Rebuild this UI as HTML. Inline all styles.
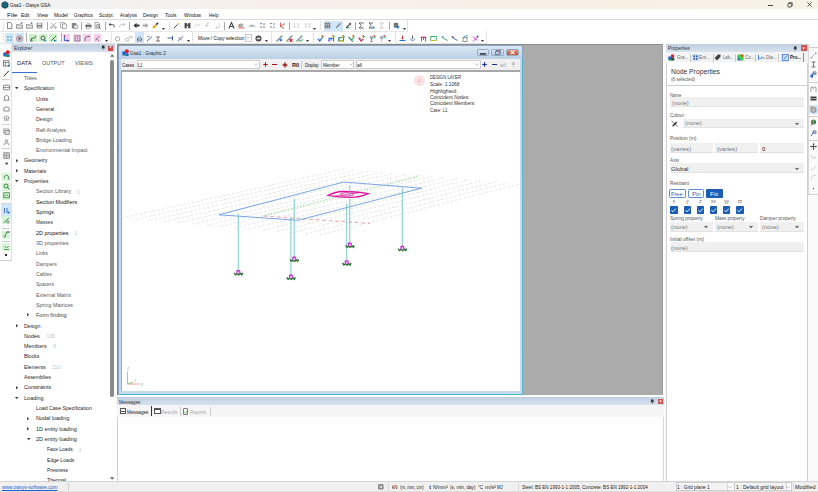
<!DOCTYPE html>
<html><head><meta charset="utf-8">
<style>
*{margin:0;padding:0;box-sizing:border-box}
html,body{width:818px;height:492px;overflow:hidden;background:#f0f0f0;font-family:"Liberation Sans",sans-serif;color:#222;position:relative}
.a{position:absolute}
.t{position:absolute;white-space:nowrap;line-height:1;transform-origin:0 50%}
svg{position:absolute;overflow:visible}
</style></head><body>
<div class="a" style="left:0px;top:0px;width:818px;height:9px;background:linear-gradient(90deg,#f2f2f2 0%,#f2f2f2 12%,#f8efea 35%,#f8f0e8 55%,#f8f0e3 75%,#f8f2e6 100%);"></div>
<svg style="left:1px;top:1px" width="8" height="8"><polygon points="4,0.2 7.4,2 7.4,6 4,7.8 0.6,6 0.6,2" fill="#0e4e60"/><circle cx="4" cy="4" r="1.6" fill="none" stroke="#2a8aa0" stroke-width="0.8"/></svg>
<div class="t" style="left:10.30px;top:3.07px;font-size:5.6px;color:#111;transform:scaleX(0.851);">Gsa1 - Oasys GSA</div>
<div class="a" style="left:768px;top:4.5px;width:5px;height:0.8px;background:#444;"></div>
<svg style="left:786.5px;top:2px" width="6" height="6"><path d="M1.8 1.2V0.6H5.2V4H4.6" fill="none" stroke="#333" stroke-width="0.7"/><rect x="0.9" y="1.5" width="3.4" height="3.6" fill="none" stroke="#333" stroke-width="0.8" rx="0.6"/></svg>
<svg style="left:806.8px;top:2.2px" width="5" height="5"><path d="M0.4 0.4L4.6 4.6M4.6 0.4L0.4 4.6" stroke="#333" stroke-width="0.8"/></svg>
<div class="a" style="left:0px;top:9px;width:818px;height:11px;background:#ffffff;"></div>
<div class="a" style="left:0px;top:19.3px;width:818px;height:1px;background:#dadada;"></div>
<div class="t" style="left:7.00px;top:12.97px;font-size:5.6px;color:#111;transform:scaleX(1.164);">File</div>
<div class="t" style="left:21.00px;top:12.97px;font-size:5.6px;color:#111;transform:scaleX(0.881);">Edit</div>
<div class="t" style="left:36.50px;top:12.97px;font-size:5.6px;color:#111;transform:scaleX(0.914);">View</div>
<div class="t" style="left:53.50px;top:12.97px;font-size:5.6px;color:#111;transform:scaleX(0.918);">Model</div>
<div class="t" style="left:74.00px;top:12.97px;font-size:5.6px;color:#111;transform:scaleX(0.848);">Graphics</div>
<div class="t" style="left:99.00px;top:12.97px;font-size:5.6px;color:#111;transform:scaleX(0.867);">Sculpt</div>
<div class="t" style="left:119.50px;top:12.97px;font-size:5.6px;color:#111;transform:scaleX(0.815);">Analysis</div>
<div class="t" style="left:143.00px;top:12.97px;font-size:5.6px;color:#111;transform:scaleX(0.861);">Design</div>
<div class="t" style="left:165.00px;top:12.97px;font-size:5.6px;color:#111;transform:scaleX(0.880);">Tools</div>
<div class="t" style="left:183.50px;top:12.97px;font-size:5.6px;color:#111;transform:scaleX(0.854);">Window</div>
<div class="t" style="left:209.00px;top:12.97px;font-size:5.6px;color:#111;transform:scaleX(0.825);">Help</div>
<div class="a" style="left:0px;top:20px;width:818px;height:24px;background:#ffffff;"></div>
<div class="a" style="left:0px;top:31px;width:407px;height:0.6px;background:#e6e6e6;"></div>
<div class="a" style="left:407px;top:20px;width:0.8px;height:11.5px;background:#e2e2e2;"></div>
<div class="a" style="left:0px;top:43.2px;width:486px;height:0.8px;background:#e4e4e4;"></div>
<div class="a" style="left:486px;top:31px;width:0.8px;height:13px;background:#e2e2e2;"></div>
<div class="a" style="left:2.5px;top:22px;width:0.8px;height:0.8px;background:#d4d4d4;"></div>
<div class="a" style="left:2.5px;top:24px;width:0.8px;height:0.8px;background:#d4d4d4;"></div>
<div class="a" style="left:2.5px;top:26px;width:0.8px;height:0.8px;background:#d4d4d4;"></div>
<div class="a" style="left:2.5px;top:28px;width:0.8px;height:0.8px;background:#d4d4d4;"></div>
<div class="a" style="left:2.5px;top:30px;width:0.8px;height:0.8px;background:#d4d4d4;"></div>
<div class="a" style="left:2.5px;top:33px;width:0.8px;height:0.8px;background:#d4d4d4;"></div>
<div class="a" style="left:2.5px;top:35px;width:0.8px;height:0.8px;background:#d4d4d4;"></div>
<div class="a" style="left:2.5px;top:37px;width:0.8px;height:0.8px;background:#d4d4d4;"></div>
<div class="a" style="left:2.5px;top:39px;width:0.8px;height:0.8px;background:#d4d4d4;"></div>
<div class="a" style="left:2.5px;top:41px;width:0.8px;height:0.8px;background:#d4d4d4;"></div>
<svg style="left:6.00px;top:22.20px" width="7" height="7" viewBox="0 0 7 7"><path d="M1.5 0.5H4.5L5.8 1.8V6.5H1.5Z" fill="#fff" stroke="#555" stroke-width="0.7"/></svg>
<svg style="left:16.00px;top:22.20px" width="7" height="7" viewBox="0 0 7 7"><path d="M0.5 2.5H3L3.6 3H6.5V6.3H0.5Z" fill="#ddd" stroke="#666" stroke-width="0.6"/><circle cx="5.5" cy="1.2" r="0.9" fill="#3a7de0"/></svg>
<svg style="left:26.00px;top:22.20px" width="7" height="7" viewBox="0 0 7 7"><path d="M0.5 2.5H3L3.6 3H6.5V6.3H0.5Z" fill="#ddd" stroke="#666" stroke-width="0.6"/><circle cx="5.5" cy="1.2" r="0.9" fill="#3a7de0"/></svg>
<svg style="left:36.00px;top:22.20px" width="7" height="7" viewBox="0 0 7 7"><rect x="0.7" y="0.8" width="5.6" height="5.5" fill="#777"/><rect x="1.7" y="1.2" width="3.6" height="1.8" fill="#eee"/><rect x="1.6" y="4" width="3.8" height="2" fill="#bbb"/></svg>
<svg style="left:50.00px;top:22.20px" width="7" height="7" viewBox="0 0 7 7"><path d="M1 0.8L5.5 5.5M6 0.8L1.5 5.5" stroke="#888" stroke-width="0.7"/><circle cx="1.5" cy="5.6" r="0.9" fill="none" stroke="#888" stroke-width="0.6"/><circle cx="5.5" cy="5.6" r="0.9" fill="none" stroke="#888" stroke-width="0.6"/></svg>
<svg style="left:60.00px;top:22.20px" width="7" height="7" viewBox="0 0 7 7"><rect x="0.7" y="0.7" width="3.8" height="4.5" fill="#fff" stroke="#777" stroke-width="0.6"/><rect x="2.5" y="2" width="3.8" height="4.5" fill="#fff" stroke="#777" stroke-width="0.6"/></svg>
<svg style="left:70.50px;top:22.20px" width="7" height="7" viewBox="0 0 7 7"><rect x="0.8" y="1" width="4.5" height="5.5" fill="#888"/><rect x="3" y="3" width="3.5" height="3.6" fill="#eee" stroke="#666" stroke-width="0.5"/></svg>
<svg style="left:84.50px;top:22.20px" width="7" height="7" viewBox="0 0 7 7"><rect x="0.5" y="2.5" width="6" height="3" rx="0.8" fill="#666"/><rect x="1.7" y="0.8" width="3.6" height="2" fill="#ccc"/><rect x="1.7" y="4.5" width="3.6" height="2" fill="#eee" stroke="#666" stroke-width="0.4"/></svg>
<svg style="left:94.00px;top:22.20px" width="7" height="7" viewBox="0 0 7 7"><path d="M1 0.5H4.5L5.5 1.5V6.3H1Z" fill="#fff" stroke="#666" stroke-width="0.6"/><circle cx="3.8" cy="3.8" r="1.4" fill="none" stroke="#444" stroke-width="0.6"/><path d="M4.8 4.8L6.5 6.5" stroke="#444" stroke-width="0.8"/></svg>
<svg style="left:108.00px;top:22.20px" width="7" height="7" viewBox="0 0 7 7"><path d="M1 2.5H4.5Q6.2 2.5 6.2 4.2V5.5" fill="none" stroke="#555" stroke-width="1"/><path d="M0.5 2.5L2.5 0.8V4.2Z" fill="#555"/></svg>
<svg style="left:118.50px;top:22.20px" width="7" height="7" viewBox="0 0 7 7"><path d="M6 2.5H2.5Q0.8 2.5 0.8 4.2V5.5" fill="none" stroke="#bbb" stroke-width="0.8"/><path d="M6.5 2.5L4.5 0.8V4.2Z" fill="#bbb"/></svg>
<svg style="left:132.50px;top:22.20px" width="7" height="7" viewBox="0 0 7 7"><path d="M0.5 3.5L3.5 0.8V2.5H6.5V4.5H3.5V6.2Z" fill="#333"/></svg>
<svg style="left:142.00px;top:22.20px" width="7" height="7" viewBox="0 0 7 7"><path d="M6.5 3.5L3.5 0.8V2.5H0.5V4.5H3.5V6.2Z" fill="#aaa"/></svg>
<svg style="left:152.20px;top:22.20px" width="7" height="7" viewBox="0 0 7 7"><path d="M1 4.5L3 2.5L4.5 4L2.5 6.2Q1 6.5 0.5 6Z" fill="#f0a010"/><path d="M3.5 2L5.8 0.3L6.6 1.1L4.8 3.4Z" fill="#333"/></svg>
<svg style="left:172.50px;top:22.20px" width="7" height="7" viewBox="0 0 7 7"><path d="M0.8 6.2L4.5 2.5" stroke="#444" stroke-width="1"/><path d="M4.5 1.5L6 0.5L5.5 2.5Z" fill="#f0a010"/></svg>
<svg style="left:183.50px;top:22.20px" width="7" height="7" viewBox="0 0 7 7"><rect x="0.6" y="1" width="2.2" height="5.3" fill="#444"/><rect x="4.2" y="1" width="2.2" height="5.3" fill="#444"/><rect x="2.5" y="2.5" width="2" height="1.5" fill="#444"/></svg>
<svg style="left:194.00px;top:22.20px" width="7" height="7" viewBox="0 0 7 7"><path d="M1 5.5Q2 1 3.5 3T6 1.5" fill="none" stroke="#c8c8c8" stroke-width="0.8"/></svg>
<svg style="left:204.30px;top:22.20px" width="7" height="7" viewBox="0 0 7 7"><path d="M2 6L3 1H5.5M1.5 3.5H4.5" fill="none" stroke="#c8c8c8" stroke-width="0.8"/></svg>
<svg style="left:214.00px;top:22.20px" width="7" height="7" viewBox="0 0 7 7"><path d="M5.5 1V5.5H1.5M3 4L1.5 5.5L3 7" fill="none" stroke="#c8c8c8" stroke-width="0.7"/></svg>
<svg style="left:228.00px;top:22.20px" width="7" height="7" viewBox="0 0 7 7"><path d="M0.8 6.5L3.5 0.5L6.2 6.5M1.8 4.5H5.2" fill="none" stroke="#444" stroke-width="1.1"/></svg>
<svg style="left:238.30px;top:22.20px" width="7" height="7" viewBox="0 0 7 7"><text x="0.3" y="4.5" font-size="4.5" font-family="Liberation Sans" fill="#444">ab</text><path d="M0.5 6H6.5" stroke="#d03030" stroke-width="0.8"/></svg>
<svg style="left:248.50px;top:22.20px" width="7" height="7" viewBox="0 0 7 7"><text x="0" y="5" font-size="4" font-family="Liberation Sans" fill="#666">abc</text></svg>
<svg style="left:258.80px;top:22.20px" width="7" height="7" viewBox="0 0 7 7"><circle cx="2" cy="1.5" r="0.8" fill="#3a7de0"/><circle cx="5" cy="2" r="0.8" fill="#666"/><circle cx="2" cy="5" r="0.8" fill="#666"/><circle cx="5" cy="5.3" r="0.8" fill="#666"/></svg>
<svg style="left:269.10px;top:22.20px" width="7" height="7" viewBox="0 0 7 7"><circle cx="2" cy="1.5" r="0.8" fill="#666"/><circle cx="5" cy="2" r="0.8" fill="#3a7de0"/><circle cx="2" cy="5" r="0.8" fill="#666"/><circle cx="5" cy="5.3" r="0.8" fill="#3a7de0"/></svg>
<svg style="left:279.30px;top:22.20px" width="7" height="7" viewBox="0 0 7 7"><path d="M1.5 0.5V4.5L5 6.5M1.5 4.5L5 2" fill="none" stroke="#d03030" stroke-width="0.8"/><circle cx="5" cy="2" r="0.7" fill="#28a060"/></svg>
<svg style="left:293.30px;top:22.20px" width="7" height="7" viewBox="0 0 7 7"><path d="M1.5 1V6M5.5 1V6M0.5 2H6.5M0.5 5H6.5" stroke="#ccc" stroke-width="0.6"/></svg>
<svg style="left:303.50px;top:22.20px" width="7" height="7" viewBox="0 0 7 7"><path d="M1.5 1V6M5.5 1V6M0.5 2H6.5M0.5 5H6.5" stroke="#ccc" stroke-width="0.6"/></svg>
<svg style="left:324.30px;top:22.20px" width="7" height="7" viewBox="0 0 7 7"><rect x="0.7" y="0.7" width="5.6" height="5.6" fill="#777"/><path d="M0.7 2.2H6.3M2.5 2.2V6.3M4.4 2.2V6.3" stroke="#ddd" stroke-width="0.5"/></svg>
<svg style="left:335.30px;top:22.20px" width="7" height="7" viewBox="0 0 7 7"><path d="M0.8 6.2L1.2 4.8L5.2 0.8L6.2 1.8L2.2 5.8Z" fill="#888"/></svg>
<svg style="left:344.90px;top:22.20px" width="7" height="7" viewBox="0 0 7 7"><path d="M1 6L4 3" stroke="#555" stroke-width="1.2"/><circle cx="5" cy="2" r="1.3" fill="#666"/><circle cx="3" cy="5.5" r="1" fill="#28a060"/></svg>
<svg style="left:358.10px;top:22.20px" width="7" height="7" viewBox="0 0 7 7"><path d="M5.8 1H1L3.5 3.5L1 6H5.8" fill="none" stroke="#444" stroke-width="0.8"/></svg>
<svg style="left:368.30px;top:22.20px" width="7" height="7" viewBox="0 0 7 7"><path d="M5 1H1L3.2 3.5L1 6H5" fill="none" stroke="#444" stroke-width="0.8"/><rect x="4.5" y="4.5" width="2" height="2" fill="#3a7de0"/></svg>
<svg style="left:378.50px;top:22.20px" width="7" height="7" viewBox="0 0 7 7"><path d="M5 1H1L3.2 3.5L1 6H5" fill="none" stroke="#bbb" stroke-width="0.8"/></svg>
<svg style="left:392.50px;top:22.20px" width="7" height="7" viewBox="0 0 7 7"><rect x="0.8" y="0.8" width="4.5" height="5" rx="1" fill="#777"/><circle cx="4.8" cy="5" r="1.5" fill="#3a7de0"/></svg>
<div class="a" style="left:323.5px;top:20.5px;width:19.5px;height:10.5px;background:#cfe6fb;"></div>
<svg style="left:324.30px;top:22.20px" width="7" height="7" viewBox="0 0 7 7"><rect x="0.7" y="0.7" width="5.6" height="5.6" fill="#777"/><path d="M0.7 2.2H6.3M2.5 2.2V6.3M4.4 2.2V6.3" stroke="#ddd" stroke-width="0.5"/></svg>
<svg style="left:335.30px;top:22.20px" width="7" height="7" viewBox="0 0 7 7"><path d="M0.8 6.2L1.2 4.8L5.2 0.8L6.2 1.8L2.2 5.8Z" fill="#888"/></svg>
<div class="a" style="left:46.5px;top:21.5px;width:0.8px;height:8.5px;background:#a8a8a8;"></div>
<div class="a" style="left:80.5px;top:21.5px;width:0.8px;height:8.5px;background:#a8a8a8;"></div>
<div class="a" style="left:104.5px;top:21.5px;width:0.8px;height:8.5px;background:#a8a8a8;"></div>
<div class="a" style="left:128.6px;top:21.5px;width:0.8px;height:8.5px;background:#a8a8a8;"></div>
<div class="a" style="left:224px;top:21.5px;width:0.8px;height:8.5px;background:#a8a8a8;"></div>
<div class="a" style="left:288.7px;top:21.5px;width:0.8px;height:8.5px;background:#a8a8a8;"></div>
<div class="a" style="left:354.5px;top:21.5px;width:0.8px;height:8.5px;background:#a8a8a8;"></div>
<div class="a" style="left:388.7px;top:21.5px;width:0.8px;height:8.5px;background:#a8a8a8;"></div>
<div class="a" style="left:169px;top:21.5px;width:0.7px;height:0.7px;background:#c8c8c8;"></div>
<div class="a" style="left:169px;top:23.5px;width:0.7px;height:0.7px;background:#c8c8c8;"></div>
<div class="a" style="left:169px;top:25.5px;width:0.7px;height:0.7px;background:#c8c8c8;"></div>
<div class="a" style="left:169px;top:27.5px;width:0.7px;height:0.7px;background:#c8c8c8;"></div>
<div class="a" style="left:319.5px;top:21.5px;width:0.7px;height:0.7px;background:#c8c8c8;"></div>
<div class="a" style="left:319.5px;top:23.5px;width:0.7px;height:0.7px;background:#c8c8c8;"></div>
<div class="a" style="left:319.5px;top:25.5px;width:0.7px;height:0.7px;background:#c8c8c8;"></div>
<div class="a" style="left:319.5px;top:27.5px;width:0.7px;height:0.7px;background:#c8c8c8;"></div>
<svg style="left:162.30px;top:27.50px" width="3" height="2"><path d="M0 0H3L1.5 2Z" fill="#333"/></svg>
<svg style="left:312.90px;top:27.50px" width="3" height="2"><path d="M0 0H3L1.5 2Z" fill="#333"/></svg>
<svg style="left:402.50px;top:27.50px" width="3" height="2"><path d="M0 0H3L1.5 2Z" fill="#333"/></svg>
<div class="a" style="left:4.5px;top:32.5px;width:9.8px;height:10px;background:#cce8fc;"></div>
<div class="a" style="left:14.6px;top:32.5px;width:9.8px;height:10px;background:#cce8fc;"></div>
<svg style="left:6.00px;top:34.60px" width="7" height="7" viewBox="0 0 7 7"><circle cx="2" cy="2" r="0.8" fill="#4a8a8a"/><circle cx="5" cy="2" r="0.8" fill="#4a8a8a"/><circle cx="2" cy="5" r="0.8" fill="#4a8a8a"/><circle cx="5" cy="5" r="0.8" fill="#4a8a8a"/></svg>
<svg style="left:16.00px;top:34.60px" width="7" height="7" viewBox="0 0 7 7"><circle cx="3.5" cy="3.5" r="2.8" fill="none" stroke="#d03030" stroke-width="0.7"/><circle cx="3.5" cy="3.5" r="1.3" fill="#555"/></svg>
<div class="a" style="left:29.2px;top:34.300000000000004px;width:7.6px;height:7.6px;background:#c6f2c6;"></div>
<svg style="left:29.50px;top:34.60px" width="7" height="7" viewBox="0 0 7 7"><path d="M1 6Q1 2 3 3T6 0.8" fill="none" stroke="#444" stroke-width="0.8"/><circle cx="1.5" cy="5.5" r="0.9" fill="none" stroke="#444" stroke-width="0.5"/></svg>
<div class="a" style="left:39.2px;top:34.300000000000004px;width:7.6px;height:7.6px;background:#c6f2c6;"></div>
<svg style="left:39.50px;top:34.60px" width="7" height="7" viewBox="0 0 7 7"><circle cx="3" cy="3" r="2" fill="none" stroke="#444" stroke-width="0.8"/><path d="M4 4.5L6.5 5.5L4.5 6.5Z" fill="#2060d0"/></svg>
<div class="a" style="left:49.2px;top:34.300000000000004px;width:7.6px;height:7.6px;background:#c6f2c6;"></div>
<svg style="left:49.50px;top:34.60px" width="7" height="7" viewBox="0 0 7 7"><path d="M1 6L6 1" stroke="#444" stroke-width="0.8"/><path d="M3.5 4.5L6.5 5.5L4.5 6.8Z" fill="#2060d0"/></svg>
<div class="a" style="left:62.7px;top:34.300000000000004px;width:7.6px;height:7.6px;background:#f6cdee;"></div>
<svg style="left:63.00px;top:34.60px" width="7" height="7" viewBox="0 0 7 7"><path d="M1.5 0.5V5.5H6" fill="none" stroke="#3050c0" stroke-width="0.8"/><circle cx="1.5" cy="0.8" r="0.7" fill="#d03030"/><path d="M3.5 4.5L6.5 5.5L4.5 6.8Z" fill="#2060d0"/></svg>
<div class="a" style="left:73.2px;top:34.300000000000004px;width:7.6px;height:7.6px;background:#f6cdee;"></div>
<svg style="left:73.50px;top:34.60px" width="7" height="7" viewBox="0 0 7 7"><rect x="1" y="1" width="5" height="5" fill="none" stroke="#666" stroke-width="0.7"/><path d="M1 3.5H6M3.5 1V6" stroke="#999" stroke-width="0.5"/></svg>
<div class="a" style="left:83.2px;top:34.300000000000004px;width:7.6px;height:7.6px;background:#f6cdee;"></div>
<svg style="left:83.50px;top:34.60px" width="7" height="7" viewBox="0 0 7 7"><path d="M1 6V4Q1 1.5 4 1.5H6" fill="none" stroke="#555" stroke-width="0.8"/></svg>
<div class="a" style="left:93.7px;top:34.300000000000004px;width:7.6px;height:7.6px;background:#f6cdee;"></div>
<svg style="left:94.00px;top:34.60px" width="7" height="7" viewBox="0 0 7 7"><path d="M1 5.5L5.5 1M2 3L5 6" stroke="#777" stroke-width="0.8"/></svg>
<svg style="left:114.10px;top:34.60px" width="7" height="7" viewBox="0 0 7 7"><circle cx="3.5" cy="3.8" r="2.2" fill="none" stroke="#777" stroke-width="0.6"/></svg>
<svg style="left:125.10px;top:34.60px" width="7" height="7" viewBox="0 0 7 7"><circle cx="2" cy="4.8" r="1.6" fill="none" stroke="#999" stroke-width="0.6"/><text x="3.5" y="2.5" font-size="3" fill="#999">xyz</text></svg>
<div class="a" style="left:134.5px;top:32px;width:9.5px;height:11px;background:#cfe6fb;"></div>
<svg style="left:135.50px;top:34.60px" width="7" height="7" viewBox="0 0 7 7"><path d="M0.8 5H6.2M1.5 5V3.5Q3.5 1 5.5 3.5V5" fill="none" stroke="#555" stroke-width="0.8"/><circle cx="2" cy="6" r="0.6" fill="#555"/><circle cx="5" cy="6" r="0.6" fill="#555"/></svg>
<svg style="left:146.00px;top:34.60px" width="7" height="7" viewBox="0 0 7 7"><path d="M0.8 6.2L6.2 1.5" stroke="#2070e0" stroke-width="0.9"/><path d="M1 1.5H4" stroke="#555" stroke-width="0.5"/></svg>
<svg style="left:155.20px;top:34.60px" width="7" height="7" viewBox="0 0 7 7"><path d="M1 2H5M3 2V6M1 6H5" fill="none" stroke="#555" stroke-width="0.8"/></svg>
<svg style="left:166.50px;top:34.60px" width="7" height="7" viewBox="0 0 7 7"><path d="M0.5 3H5.5M5.5 0.8V5.5" stroke="#3050a0" stroke-width="0.9"/></svg>
<svg style="left:177.10px;top:34.60px" width="7" height="7" viewBox="0 0 7 7"><path d="M0.8 6L6.2 1.5" stroke="#2070e0" stroke-width="0.9"/><path d="M1.5 2L5 5.5" stroke="#d03030" stroke-width="0.6"/></svg>
<svg style="left:254.50px;top:34.60px" width="7" height="7" viewBox="0 0 7 7"><circle cx="3.5" cy="3.5" r="3" fill="#3a3a3a"/><circle cx="3.5" cy="3.5" r="2.2" fill="#666"/><rect x="1.8" y="2.8" width="3.4" height="1.4" fill="#ddd"/></svg>
<svg style="left:275.50px;top:34.60px" width="7" height="7" viewBox="0 0 7 7"><path d="M1 6L5.8 1.2" stroke="#9a9a9a" stroke-width="1.7" stroke-linecap="round"/><path d="M1.8 5.2L5 2" stroke="#5a9ae8" stroke-width="0.6" stroke-dasharray="0.8 0.6"/><path d="M3 4.6H6.6L4.8 6.8Z" fill="#1a70e8"/><rect x="4.2" y="3.6" width="1.2" height="1.2" fill="#1a70e8"/></svg>
<svg style="left:285.90px;top:34.60px" width="7" height="7" viewBox="0 0 7 7"><path d="M1 6L5.8 1.2" stroke="#9a9a9a" stroke-width="1.7" stroke-linecap="round"/><path d="M1.8 5.2L5 2" stroke="#5a9ae8" stroke-width="0.6" stroke-dasharray="0.8 0.6"/><path d="M3.6 4L6.4 6.8M6.4 4L3.6 6.8" stroke="#e02020" stroke-width="1.1"/></svg>
<svg style="left:296.20px;top:34.60px" width="7" height="7" viewBox="0 0 7 7"><path d="M1 6L5.8 1.2" stroke="#9a9a9a" stroke-width="1.7" stroke-linecap="round"/><path d="M1.8 5.2L5 2" stroke="#5a9ae8" stroke-width="0.6" stroke-dasharray="0.8 0.6"/><path d="M3 5.5Q4.5 7 6.5 4.5" fill="none" stroke="#20b060" stroke-width="1.1"/><path d="M5.5 4.2L6.8 4.2L6.5 5.5Z" fill="#20b060"/></svg>
<svg style="left:317.00px;top:34.60px" width="7" height="7" viewBox="0 0 7 7"><path d="M0.8 3.8L2.8 6.2L5 2.5" fill="none" stroke="#2a6ad8" stroke-width="1.1"/><path d="M2 3L3 4.5" stroke="#666" stroke-width="0.6"/><circle cx="5.2" cy="0.9" r="0.8" fill="#e03030"/><circle cx="6.3" cy="1.6" r="0.7" fill="#30a0e0"/><circle cx="4.6" cy="2" r="0.7" fill="#f0d020"/><circle cx="5.6" cy="2.6" r="0.7" fill="#30c040"/></svg>
<svg style="left:327.50px;top:34.60px" width="7" height="7" viewBox="0 0 7 7"><path d="M1 6.5V3.2H5.5V6.5M3 3.2V5.5" fill="none" stroke="#2a6ad8" stroke-width="1.1"/><path d="M1 6.5V5" stroke="#c040d0" stroke-width="1"/><circle cx="5.2" cy="0.9" r="0.8" fill="#e03030"/><circle cx="6.3" cy="1.6" r="0.7" fill="#30a0e0"/><circle cx="4.6" cy="2" r="0.7" fill="#f0d020"/><circle cx="5.6" cy="2.6" r="0.7" fill="#30c040"/></svg>
<svg style="left:337.50px;top:34.60px" width="7" height="7" viewBox="0 0 7 7"><rect x="0.9" y="2.6" width="4.6" height="3.4" fill="none" stroke="#20a050" stroke-width="1"/><path d="M0.9 6H5.5" stroke="#f0c000" stroke-width="1"/><path d="M0.9 2.6V6" stroke="#2a6ad8" stroke-width="0.8"/><circle cx="5.2" cy="0.9" r="0.8" fill="#e03030"/><circle cx="6.3" cy="1.6" r="0.7" fill="#30a0e0"/><circle cx="4.6" cy="2" r="0.7" fill="#f0d020"/><circle cx="5.6" cy="2.6" r="0.7" fill="#30c040"/></svg>
<svg style="left:347.80px;top:34.60px" width="7" height="7" viewBox="0 0 7 7"><path d="M0.6 2.2L3 4.8L5.5 3.5M3 4.8L5 6.6" fill="none" stroke="#20a070" stroke-width="1.1"/><path d="M0.6 2.2L2 3.5" stroke="#2a6ad8" stroke-width="1"/><circle cx="5.2" cy="0.9" r="0.8" fill="#e03030"/><circle cx="6.3" cy="1.6" r="0.7" fill="#30a0e0"/><circle cx="4.6" cy="2" r="0.7" fill="#f0d020"/><circle cx="5.6" cy="2.6" r="0.7" fill="#30c040"/></svg>
<svg style="left:358.10px;top:34.60px" width="7" height="7" viewBox="0 0 7 7"><path d="M0.6 3L3.2 6.2L5.2 3.8" fill="none" stroke="#d02040" stroke-width="1.1"/><path d="M1 2.5L3.5 4.5" stroke="#2a6ad8" stroke-width="0.9"/><circle cx="5.2" cy="0.9" r="0.8" fill="#e03030"/><circle cx="6.3" cy="1.6" r="0.7" fill="#30a0e0"/><circle cx="4.6" cy="2" r="0.7" fill="#f0d020"/><circle cx="5.6" cy="2.6" r="0.7" fill="#30c040"/></svg>
<svg style="left:368.50px;top:34.60px" width="7" height="7" viewBox="0 0 7 7"><path d="M2.5 6.6V3.5M1 6.6H4" fill="none" stroke="#888" stroke-width="0.8"/><circle cx="2.7" cy="2.6" r="1.5" fill="none" stroke="#777" stroke-width="0.7"/><path d="M1.5 2.2L3.8 3.2" stroke="#2a6ad8" stroke-width="0.8"/><circle cx="5.2" cy="0.9" r="0.8" fill="#e03030"/><circle cx="6.3" cy="1.6" r="0.7" fill="#30a0e0"/><circle cx="4.6" cy="2" r="0.7" fill="#f0d020"/><circle cx="5.6" cy="2.6" r="0.7" fill="#30c040"/></svg>
<svg style="left:378.50px;top:34.60px" width="7" height="7" viewBox="0 0 7 7"><path d="M1.5 6.5Q3.5 5.8 2.5 4.5" fill="none" stroke="#999" stroke-width="0.8"/><circle cx="2.7" cy="2.6" r="1.5" fill="none" stroke="#888" stroke-width="0.7"/><path d="M1.5 2.2L3.8 3.2" stroke="#2a6ad8" stroke-width="0.8"/><circle cx="5.2" cy="0.9" r="0.8" fill="#e03030"/><circle cx="6.3" cy="1.6" r="0.7" fill="#30a0e0"/><circle cx="4.6" cy="2" r="0.7" fill="#f0d020"/><circle cx="5.6" cy="2.6" r="0.7" fill="#30c040"/></svg>
<svg style="left:399.00px;top:34.60px" width="7" height="7" viewBox="0 0 7 7"><path d="M3.5 0.5V4" stroke="#d02020" stroke-width="0.9"/><path d="M2 3L3.5 4.5L5 3" fill="#d02020"/><path d="M0.5 5.5H6.5" stroke="#2070e0" stroke-width="1"/></svg>
<svg style="left:409.10px;top:34.60px" width="7" height="7" viewBox="0 0 7 7"><path d="M3.5 0.5V4" stroke="#333" stroke-width="0.8"/><path d="M1 3.5L3.5 6L6 3.5" fill="none" stroke="#2070e0" stroke-width="0.9"/></svg>
<svg style="left:419.50px;top:34.60px" width="7" height="7" viewBox="0 0 7 7"><path d="M0.8 2.5H6.2M1.5 2.5V6.5M5.5 2.5V6.5M3.5 2.5V5" stroke="#8040c0" stroke-width="0.9"/><path d="M0.8 2H6.2" stroke="#d03030" stroke-width="0.6"/></svg>
<svg style="left:430.10px;top:34.60px" width="7" height="7" viewBox="0 0 7 7"><rect x="0.8" y="1.5" width="5.4" height="4" fill="none" stroke="#20a040" stroke-width="0.8"/><path d="M0.8 5.5H6.2" stroke="#e0c000" stroke-width="0.9"/></svg>
<svg style="left:440.50px;top:34.60px" width="7" height="7" viewBox="0 0 7 7"><path d="M0.5 2L6.5 5.5" stroke="#20a060" stroke-width="0.9"/><path d="M1 1L3 2.2" stroke="#2080e0" stroke-width="0.7"/></svg>
<svg style="left:451.00px;top:34.60px" width="7" height="7" viewBox="0 0 7 7"><path d="M0.5 2L6.5 5.5" stroke="#2060d0" stroke-width="0.9"/><path d="M1 1L3 3" stroke="#d02020" stroke-width="0.8"/></svg>
<svg style="left:461.50px;top:34.60px" width="7" height="7" viewBox="0 0 7 7"><rect x="1" y="2.5" width="4" height="4" fill="none" stroke="#666" stroke-width="0.7"/><path d="M1.5 2.5L3.5 0.8H6" fill="none" stroke="#2080e0" stroke-width="0.8"/></svg>
<svg style="left:471.50px;top:34.60px" width="7" height="7" viewBox="0 0 7 7"><path d="M1 6.5L6 1.5M1 1.5L5 5.5" stroke="#d020c0" stroke-width="0.9"/><circle cx="5.5" cy="1.5" r="0.9" fill="#2060d0"/></svg>
<div class="a" style="left:26px;top:33px;width:0.8px;height:9px;background:#a8a8a8;"></div>
<div class="a" style="left:60.5px;top:33px;width:0.8px;height:9px;background:#a8a8a8;"></div>
<div class="a" style="left:111px;top:33px;width:0.7px;height:0.7px;background:#c8c8c8;"></div>
<div class="a" style="left:111px;top:35px;width:0.7px;height:0.7px;background:#c8c8c8;"></div>
<div class="a" style="left:111px;top:37px;width:0.7px;height:0.7px;background:#c8c8c8;"></div>
<div class="a" style="left:111px;top:39px;width:0.7px;height:0.7px;background:#c8c8c8;"></div>
<div class="a" style="left:111px;top:41px;width:0.7px;height:0.7px;background:#c8c8c8;"></div>
<div class="a" style="left:191.6px;top:33px;width:0.7px;height:0.7px;background:#c8c8c8;"></div>
<div class="a" style="left:191.6px;top:35px;width:0.7px;height:0.7px;background:#c8c8c8;"></div>
<div class="a" style="left:191.6px;top:37px;width:0.7px;height:0.7px;background:#c8c8c8;"></div>
<div class="a" style="left:191.6px;top:39px;width:0.7px;height:0.7px;background:#c8c8c8;"></div>
<div class="a" style="left:191.6px;top:41px;width:0.7px;height:0.7px;background:#c8c8c8;"></div>
<div class="a" style="left:271px;top:33px;width:0.7px;height:0.7px;background:#c8c8c8;"></div>
<div class="a" style="left:271px;top:35px;width:0.7px;height:0.7px;background:#c8c8c8;"></div>
<div class="a" style="left:271px;top:37px;width:0.7px;height:0.7px;background:#c8c8c8;"></div>
<div class="a" style="left:271px;top:39px;width:0.7px;height:0.7px;background:#c8c8c8;"></div>
<div class="a" style="left:271px;top:41px;width:0.7px;height:0.7px;background:#c8c8c8;"></div>
<div class="a" style="left:313px;top:33px;width:0.7px;height:0.7px;background:#c8c8c8;"></div>
<div class="a" style="left:313px;top:35px;width:0.7px;height:0.7px;background:#c8c8c8;"></div>
<div class="a" style="left:313px;top:37px;width:0.7px;height:0.7px;background:#c8c8c8;"></div>
<div class="a" style="left:313px;top:39px;width:0.7px;height:0.7px;background:#c8c8c8;"></div>
<div class="a" style="left:313px;top:41px;width:0.7px;height:0.7px;background:#c8c8c8;"></div>
<div class="a" style="left:395.3px;top:33px;width:0.7px;height:0.7px;background:#c8c8c8;"></div>
<div class="a" style="left:395.3px;top:35px;width:0.7px;height:0.7px;background:#c8c8c8;"></div>
<div class="a" style="left:395.3px;top:37px;width:0.7px;height:0.7px;background:#c8c8c8;"></div>
<div class="a" style="left:395.3px;top:39px;width:0.7px;height:0.7px;background:#c8c8c8;"></div>
<div class="a" style="left:395.3px;top:41px;width:0.7px;height:0.7px;background:#c8c8c8;"></div>
<svg style="left:104.50px;top:40.00px" width="3" height="2"><path d="M0 0H3L1.5 2Z" fill="#333"/></svg>
<svg style="left:186.50px;top:40.00px" width="3" height="2"><path d="M0 0H3L1.5 2Z" fill="#333"/></svg>
<svg style="left:264.50px;top:40.00px" width="3" height="2"><path d="M0 0H3L1.5 2Z" fill="#333"/></svg>
<svg style="left:306.30px;top:40.00px" width="3" height="2"><path d="M0 0H3L1.5 2Z" fill="#333"/></svg>
<svg style="left:388.20px;top:40.00px" width="3" height="2"><path d="M0 0H3L1.5 2Z" fill="#333"/></svg>
<svg style="left:480.50px;top:40.00px" width="3" height="2"><path d="M0 0H3L1.5 2Z" fill="#333"/></svg>
<div class="t" style="left:197.50px;top:36.27px;font-size:5.6px;color:#111;transform:scaleX(0.844);">Move / Copy selection</div>
<div class="a" style="left:245px;top:33.5px;width:6.5px;height:8px;border:0.6px solid #ccc;background:#fff"></div>
<svg style="left:246.3px;top:36px" width="4" height="3"><path d="M0.3 0.5L2 2.3L3.7 0.5" fill="none" stroke="#777" stroke-width="0.5"/></svg>
<div class="a" style="left:0px;top:44px;width:818px;height:438px;background:#ffffff;"></div>
<div class="a" style="left:0px;top:44px;width:11.5px;height:216px;background:#fbfbfb;"></div>
<div class="a" style="left:11.2px;top:44px;width:0.8px;height:216px;background:#e0e0e0;"></div>
<div class="a" style="left:0px;top:259.5px;width:12px;height:0.8px;background:#cfcfcf;"></div>
<div class="a" style="left:1px;top:203px;width:10px;height:15px;background:#cfe6fb;"></div>
<svg style="left:2.50px;top:49.50px" width="7" height="7" viewBox="0 0 7 7"><rect x="0.3" y="2.5" width="3.8" height="3.8" fill="#2060d0"/><circle cx="4.8" cy="2.2" r="2" fill="#e02020"/><path d="M1.8 6.8L3.6 4L5.4 6.8Z" fill="#20b040"/><rect x="4" y="4.3" width="2.6" height="2.6" fill="#2060d0"/></svg>
<svg style="left:2.50px;top:60.00px" width="7" height="7" viewBox="0 0 7 7"><rect x="0.5" y="0.8" width="5.5" height="5.2" fill="none" stroke="#555" stroke-width="0.7"/><path d="M0.5 2.5H6M2.5 2.5V6" stroke="#555" stroke-width="0.6"/><circle cx="5.8" cy="5.8" r="1" fill="#2070e0"/></svg>
<svg style="left:2.50px;top:69.80px" width="7" height="7" viewBox="0 0 7 7"><path d="M0.8 6.3L5.8 0.8" stroke="#333" stroke-width="1"/></svg>
<svg style="left:2.50px;top:83.50px" width="7" height="7" viewBox="0 0 7 7"><rect x="0.5" y="1.2" width="6" height="4.6" rx="0.8" fill="none" stroke="#555" stroke-width="0.7"/><path d="M0.5 3.5H6.5" stroke="#555" stroke-width="0.6"/></svg>
<svg style="left:2.50px;top:94.10px" width="7" height="7" viewBox="0 0 7 7"><path d="M1.5 6V2.5Q3.5 0 5.5 2.5V6M0.5 6.2H6.5" fill="none" stroke="#666" stroke-width="0.7"/></svg>
<svg style="left:2.50px;top:104.50px" width="7" height="7" viewBox="0 0 7 7"><path d="M0.8 6V3Q3.5 0.5 6.2 3V6H0.8" fill="none" stroke="#666" stroke-width="0.7"/></svg>
<svg style="left:2.50px;top:115.30px" width="7" height="7" viewBox="0 0 7 7"><path d="M1 4Q1 1 3.5 1Q6 1 6 4M2 3V6M3.5 2.5V6M5 3V6" fill="none" stroke="#666" stroke-width="0.6"/></svg>
<svg style="left:2.50px;top:127.90px" width="7" height="7" viewBox="0 0 7 7"><rect x="0.8" y="1" width="4.5" height="4" fill="none" stroke="#666" stroke-width="0.6"/><rect x="2" y="2.5" width="4.5" height="4" fill="#ddd" stroke="#666" stroke-width="0.6"/></svg>
<svg style="left:2.50px;top:138.50px" width="7" height="7" viewBox="0 0 7 7"><circle cx="3.5" cy="2" r="1.3" fill="none" stroke="#666" stroke-width="0.6"/><path d="M1 6.5Q1 3.8 3.5 3.8Q6 3.8 6 6.5" fill="none" stroke="#666" stroke-width="0.6"/></svg>
<svg style="left:2.50px;top:151.50px" width="7" height="7" viewBox="0 0 7 7"><rect x="0.8" y="0.8" width="5.5" height="5.5" fill="#ccc" stroke="#666" stroke-width="0.6"/><path d="M0.8 3.5H6.3M3.5 0.8V6.3" stroke="#888" stroke-width="0.5"/></svg>
<div class="a" style="left:2px;top:173px;width:8px;height:8px;background:#d8f5d8;"></div>
<svg style="left:2.50px;top:173.50px" width="7" height="7" viewBox="0 0 7 7"><path d="M1.5 4.5A2.2 2.2 0 1 1 5.5 4.5" fill="none" stroke="#227733" stroke-width="0.9"/><path d="M4.5 4.5H6.5V6Z" fill="#227733"/></svg>
<div class="a" style="left:2px;top:182.7px;width:8px;height:8px;background:#d8f5d8;"></div>
<svg style="left:2.50px;top:183.20px" width="7" height="7" viewBox="0 0 7 7"><circle cx="3" cy="3" r="2" fill="none" stroke="#227733" stroke-width="0.9"/><path d="M4.5 4.5L6.5 6.5" stroke="#227733" stroke-width="1"/></svg>
<div class="a" style="left:2px;top:191.6px;width:8px;height:8px;background:#d8f5d8;"></div>
<svg style="left:2.50px;top:192.10px" width="7" height="7" viewBox="0 0 7 7"><rect x="0.8" y="0.8" width="5.5" height="5" fill="none" stroke="#227733" stroke-width="0.7"/><path d="M1.5 4.5L3.5 2.5L5.5 4.5" fill="none" stroke="#227733" stroke-width="0.7"/></svg>
<svg style="left:2.50px;top:206.90px" width="7" height="7" viewBox="0 0 7 7"><path d="M1.5 1V6M4 1V6" stroke="#2255aa" stroke-width="0.8"/><circle cx="5.5" cy="5.5" r="1" fill="#2255aa"/></svg>
<div class="a" style="left:2px;top:216px;width:8px;height:8px;background:#d8f5d8;"></div>
<svg style="left:2.50px;top:216.50px" width="7" height="7" viewBox="0 0 7 7"><path d="M0.8 6L5.8 1" stroke="#227733" stroke-width="0.9"/><circle cx="5" cy="5" r="1.2" fill="none" stroke="#444" stroke-width="0.5"/></svg>
<div class="a" style="left:2px;top:230.8px;width:8px;height:8px;background:#d8f5d8;"></div>
<svg style="left:2.50px;top:231.30px" width="7" height="7" viewBox="0 0 7 7"><path d="M0.5 4.5L1.8 6.3L3.5 1H6.5" fill="none" stroke="#227733" stroke-width="0.8"/><path d="M4 1H6.5" stroke="#8030a0" stroke-width="0.8"/></svg>
<div class="a" style="left:2px;top:243px;width:8px;height:8px;background:#d8f5d8;"></div>
<svg style="left:2.50px;top:243.50px" width="7" height="7" viewBox="0 0 7 7"><path d="M1 5.5H6M1.5 2L3 4M5.5 2L4 4" stroke="#227733" stroke-width="0.7"/></svg>
<div class="a" style="left:2px;top:79px;width:8px;height:0.6px;background:#cfcfcf;"></div>
<div class="a" style="left:2px;top:124px;width:8px;height:0.6px;background:#cfcfcf;"></div>
<div class="a" style="left:2px;top:148px;width:8px;height:0.6px;background:#cfcfcf;"></div>
<div class="a" style="left:2px;top:202.8px;width:8px;height:0.6px;background:#cfcfcf;"></div>
<div class="a" style="left:2px;top:227.5px;width:8px;height:0.6px;background:#cfcfcf;"></div>
<div class="a" style="left:2px;top:241px;width:8px;height:0.6px;background:#cfcfcf;"></div>
<svg style="left:4.5px;top:161.5px" width="3" height="3"><path d="M2.5 0L0 1.5L2.5 3Z" fill="#333"/></svg>
<div class="a" style="left:5.2px;top:254.3px;width:1.4px;height:1.4px;background:#333;"></div>
<div class="a" style="left:12px;top:44px;width:104px;height:438px;background:#ffffff;"></div>
<div class="a" style="left:12px;top:44.2px;width:102.6px;height:7.7px;background:linear-gradient(#bfcfe1,#d7e2ee);"></div>
<div class="t" style="left:13.80px;top:46.07px;font-size:5.0px;color:#333;transform:scaleX(0.967);">Explorer</div>
<svg style="left:100.5px;top:45.2px" width="4.5" height="5"><path d="M1 0.5H3.5V2.5L4.2 3.2H0.3L1 2.5Z" fill="#333"/><path d="M2.2 3.2V4.8" stroke="#333" stroke-width="0.6"/></svg>
<div class="a" style="left:108.3px;top:45.6px;width:5.2px;height:5.2px;background:#d24444;"></div>
<svg style="left:109.3px;top:46.3px" width="3" height="3"><path d="M0.2 0.6H2.8L1.5 2.6Z" fill="#fff"/></svg>
<div class="a" style="left:114.6px;top:44px;width:2.4px;height:438px;background:#fcfcfc;"></div>
<div class="t" style="left:17.00px;top:61.20px;font-size:5.8px;color:#1a1a1a;transform:scaleX(0.993);">DATA</div>
<div class="t" style="left:42.00px;top:61.20px;font-size:5.8px;color:#555;transform:scaleX(0.944);">OUTPUT</div>
<div class="t" style="left:75.30px;top:61.20px;font-size:5.8px;color:#555;transform:scaleX(0.952);">VIEWS</div>
<div class="a" style="left:12.2px;top:72px;width:24.4px;height:1px;background:#3a6fd8;"></div>
<div class="a" style="left:109.5px;top:52px;width:5px;height:430px;background:#ffffff;"></div>
<svg style="left:109.8px;top:54.2px" width="4.4" height="3"><path d="M0 2.8L2.2 0.2L4.4 2.8Z" fill="#666"/></svg>
<div class="a" style="left:110px;top:60px;width:3.8px;height:337px;background:#8a8a8a;border-radius:1.8px"></div>
<svg style="left:109.8px;top:476.5px" width="4.4" height="3"><path d="M0 0.2L2.2 2.8L4.4 0.2Z" fill="#666"/></svg>
<div class="a" style="left:12px;top:73px;width:97px;height:409px;overflow:hidden">
<div class="t" style="left:12.40px;top:1.93px;font-size:6.0px;color:#5a5a5a;transform:scaleX(0.907);">Titles</div>
<div class="t" style="left:12.40px;top:12.25px;font-size:6.0px;color:#262626;transform:scaleX(0.888);">Specification</div>
<svg style="left:3.20px;top:14.32px" width="3.5" height="2.5"><path d="M0 0H3.5L1.75 2.2Z" fill="#444"/></svg>
<div class="t" style="left:23.70px;top:22.56px;font-size:6.0px;color:#262626;transform:scaleX(0.900);">Units</div>
<div class="t" style="left:23.70px;top:32.88px;font-size:6.0px;color:#262626;transform:scaleX(0.853);">General</div>
<div class="t" style="left:23.70px;top:43.19px;font-size:6.0px;color:#3a3a3a;transform:scaleX(0.873);">Design</div>
<div class="t" style="left:23.70px;top:53.51px;font-size:6.0px;color:#5a5a5a;transform:scaleX(0.859);">Raft Analysis</div>
<div class="t" style="left:23.70px;top:63.83px;font-size:6.0px;color:#5a5a5a;transform:scaleX(0.887);">Bridge Loading</div>
<div class="t" style="left:23.70px;top:74.14px;font-size:6.0px;color:#5a5a5a;transform:scaleX(0.888);">Environmental Impact</div>
<div class="t" style="left:12.40px;top:84.46px;font-size:6.0px;color:#262626;transform:scaleX(0.892);">Geometry</div>
<svg style="left:4.10px;top:85.73px" width="2.5" height="3.6"><path d="M0 0V3.6L2.2 1.8Z" fill="#444"/></svg>
<div class="t" style="left:12.40px;top:94.77px;font-size:6.0px;color:#262626;transform:scaleX(0.912);">Materials</div>
<svg style="left:4.10px;top:96.04px" width="2.5" height="3.6"><path d="M0 0V3.6L2.2 1.8Z" fill="#444"/></svg>
<div class="t" style="left:12.40px;top:105.09px;font-size:6.0px;color:#262626;transform:scaleX(0.892);">Properties</div>
<svg style="left:3.20px;top:107.16px" width="3.5" height="2.5"><path d="M0 0H3.5L1.75 2.2Z" fill="#444"/></svg>
<div class="t" style="left:23.70px;top:115.41px;font-size:6.0px;color:#5a5a5a;transform:scaleX(0.875);">Section Library</div>
<div class="t" style="left:64.90px;top:116.75px;font-size:5.0px;color:#c4c4c4;">1</div>
<div class="t" style="left:23.70px;top:125.72px;font-size:6.0px;color:#161616;transform:scaleX(0.897);">Section Modifiers</div>
<div class="t" style="left:23.70px;top:136.04px;font-size:6.0px;color:#161616;transform:scaleX(0.880);">Springs</div>
<div class="t" style="left:23.70px;top:146.35px;font-size:6.0px;color:#3a3a3a;transform:scaleX(0.822);">Masses</div>
<div class="t" style="left:23.70px;top:156.67px;font-size:6.0px;color:#0a0a0a;transform:scaleX(0.900);">2D properties</div>
<div class="t" style="left:62.30px;top:158.02px;font-size:5.0px;color:#c4c4c4;">1</div>
<div class="t" style="left:23.70px;top:166.99px;font-size:6.0px;color:#5a5a5a;transform:scaleX(0.900);">3D properties</div>
<div class="t" style="left:23.70px;top:177.30px;font-size:6.0px;color:#5a5a5a;transform:scaleX(0.850);">Links</div>
<div class="t" style="left:23.70px;top:187.62px;font-size:6.0px;color:#5a5a5a;transform:scaleX(0.855);">Dampers</div>
<div class="t" style="left:23.70px;top:197.93px;font-size:6.0px;color:#5a5a5a;transform:scaleX(0.841);">Cables</div>
<div class="t" style="left:23.70px;top:208.25px;font-size:6.0px;color:#5a5a5a;transform:scaleX(0.813);">Spacers</div>
<div class="t" style="left:23.70px;top:218.57px;font-size:6.0px;color:#5a5a5a;transform:scaleX(0.875);">External Matrix</div>
<div class="t" style="left:23.70px;top:228.88px;font-size:6.0px;color:#5a5a5a;transform:scaleX(0.888);">Spring Matrices</div>
<div class="t" style="left:23.70px;top:239.20px;font-size:6.0px;color:#3a3a3a;transform:scaleX(0.915);">Form finding</div>
<svg style="left:15.40px;top:240.47px" width="2.5" height="3.6"><path d="M0 0V3.6L2.2 1.8Z" fill="#444"/></svg>
<div class="t" style="left:12.40px;top:249.51px;font-size:6.0px;color:#262626;transform:scaleX(0.873);">Design</div>
<svg style="left:4.10px;top:250.78px" width="2.5" height="3.6"><path d="M0 0V3.6L2.2 1.8Z" fill="#444"/></svg>
<div class="t" style="left:12.40px;top:259.83px;font-size:6.0px;color:#262626;transform:scaleX(0.911);">Nodes</div>
<div class="t" style="left:34.40px;top:261.18px;font-size:5.0px;color:#c4c4c4;">138</div>
<div class="t" style="left:12.40px;top:270.15px;font-size:6.0px;color:#262626;transform:scaleX(0.908);">Members</div>
<div class="t" style="left:41.30px;top:271.49px;font-size:5.0px;color:#c4c4c4;">6</div>
<div class="t" style="left:12.40px;top:280.46px;font-size:6.0px;color:#262626;transform:scaleX(0.866);">Blocks</div>
<div class="t" style="left:12.40px;top:290.78px;font-size:6.0px;color:#262626;transform:scaleX(0.864);">Elements</div>
<div class="t" style="left:40.20px;top:292.12px;font-size:5.0px;color:#c4c4c4;">110</div>
<div class="t" style="left:12.40px;top:301.09px;font-size:6.0px;color:#262626;transform:scaleX(0.877);">Assemblies</div>
<div class="t" style="left:12.40px;top:311.41px;font-size:6.0px;color:#262626;transform:scaleX(0.900);">Constraints</div>
<svg style="left:4.10px;top:312.68px" width="2.5" height="3.6"><path d="M0 0V3.6L2.2 1.8Z" fill="#444"/></svg>
<div class="t" style="left:12.40px;top:321.73px;font-size:6.0px;color:#262626;transform:scaleX(0.918);">Loading</div>
<svg style="left:3.20px;top:323.80px" width="3.5" height="2.5"><path d="M0 0H3.5L1.75 2.2Z" fill="#444"/></svg>
<div class="t" style="left:23.70px;top:332.04px;font-size:6.0px;color:#262626;transform:scaleX(0.862);">Load Case Specification</div>
<div class="t" style="left:23.70px;top:342.36px;font-size:6.0px;color:#262626;transform:scaleX(0.905);">Nodal loading</div>
<svg style="left:15.40px;top:343.63px" width="2.5" height="3.6"><path d="M0 0V3.6L2.2 1.8Z" fill="#444"/></svg>
<div class="t" style="left:23.70px;top:352.67px;font-size:6.0px;color:#262626;transform:scaleX(0.915);">1D entity loading</div>
<svg style="left:15.40px;top:353.94px" width="2.5" height="3.6"><path d="M0 0V3.6L2.2 1.8Z" fill="#444"/></svg>
<div class="t" style="left:23.70px;top:362.99px;font-size:6.0px;color:#262626;transform:scaleX(0.915);">2D entity loading</div>
<svg style="left:14.50px;top:365.06px" width="3.5" height="2.5"><path d="M0 0H3.5L1.75 2.2Z" fill="#444"/></svg>
<div class="t" style="left:35.00px;top:373.31px;font-size:6.0px;color:#262626;transform:scaleX(0.817);">Face Loads</div>
<div class="t" style="left:66.80px;top:374.65px;font-size:5.0px;color:#c4c4c4;">1</div>
<div class="t" style="left:35.00px;top:383.62px;font-size:6.0px;color:#262626;transform:scaleX(0.852);">Edge Loads</div>
<div class="t" style="left:35.00px;top:393.94px;font-size:6.0px;color:#262626;transform:scaleX(0.833);">Prestress</div>
<div class="t" style="left:35.00px;top:404.25px;font-size:6.0px;color:#262626;transform:scaleX(0.864);">Thermal</div>
</div>
<div class="a" style="left:117px;top:44px;width:546.2px;height:351px;background:#ababab;"></div>
<div class="a" style="left:117px;top:44px;width:546.2px;height:0.8px;background:#8a8a8a;"></div>
<div class="a" style="left:662.4px;top:44px;width:0.8px;height:351px;background:#9c9c9c;"></div>
<div class="a" style="left:117px;top:44px;width:0.9px;height:351px;background:#848484;"></div>
<div class="a" style="left:118.2px;top:45.3px;width:405px;height:349.9px;background:linear-gradient(#dce8f5 0px,#bcd1e8 12.5px,#c4d8ed 13.5px,#c6daef 100%);border:0.7px solid #8aa6c4;border-radius:2.5px 2.5px 0 0"></div>
<div class="a" style="left:118.5px;top:393.9px;width:404.5px;height:1.2px;background:#4ab8cc;"></div>
<div class="a" style="left:522px;top:58px;width:1.2px;height:337px;background:#5ab4cc;"></div>
<svg style="left:121.5px;top:49px" width="7" height="7" viewBox="0 0 7 7"><rect x="0.3" y="2.5" width="3.8" height="3.8" fill="#2060d0"/><circle cx="4.8" cy="2.2" r="2" fill="#e02020"/><path d="M1.8 6.8L3.6 4L5.4 6.8Z" fill="#20b040"/><rect x="4" y="4.3" width="2.6" height="2.6" fill="#2060d0"/></svg>
<div class="t" style="left:129.70px;top:51.07px;font-size:5.6px;color:#2a2a2a;transform:scaleX(0.850);">Gsa1 : Graphic 2</div>
<div class="a" style="left:476.8px;top:49px;width:12.2px;height:7px;background:linear-gradient(#dfeaf5,#b3c9e1);border:0.6px solid #93a9c2;border-radius:1.5px"></div>
<div class="a" style="left:491px;top:49px;width:13px;height:7px;background:linear-gradient(#dfeaf5,#b3c9e1);border:0.6px solid #93a9c2;border-radius:1.5px"></div>
<div class="a" style="left:505.6px;top:49px;width:13.2px;height:7px;background:linear-gradient(#e39a88,#c44a30);border:0.6px solid #93a9c2;border-radius:1.5px"></div>
<div class="a" style="left:480.3px;top:52.6px;width:5.5px;height:1.6px;background:#f4f6f8;border:0.4px solid #556"></div>
<svg style="left:494.5px;top:50.2px" width="6" height="5"><rect x="1.8" y="0.5" width="3.5" height="2.6" fill="none" stroke="#445" stroke-width="0.6"/><rect x="0.6" y="1.7" width="3.5" height="2.6" fill="#cdd8e6" stroke="#445" stroke-width="0.6"/></svg>
<svg style="left:509.5px;top:50.2px" width="5" height="5"><path d="M0.6 0.6L4.4 4.4M4.4 0.6L0.6 4.4" stroke="#fff" stroke-width="1.1"/></svg>
<div class="a" style="left:120.8px;top:58.5px;width:399.5px;height:12px;background:#f0f0f0;"></div>
<div class="t" style="left:122.30px;top:62.87px;font-size:5.6px;color:#111;transform:scaleX(0.775);">Cases</div>
<div class="a" style="left:136.7px;top:59.8px;width:123.8px;height:9.5px;background:#fff;border:0.6px solid #cfcfcf"></div>
<div class="t" style="left:138.30px;top:62.87px;font-size:5.6px;color:#222;transform:scaleX(0.723);">L1</div>
<svg style="left:254px;top:63px" width="4" height="3"><path d="M0.3 0.4L2 2.2L3.7 0.4" fill="none" stroke="#888" stroke-width="0.5"/></svg>
<svg style="left:262.5px;top:61.8px" width="5" height="5"><path d="M2.5 0.3V4.7M0.3 2.5H4.7" stroke="#b01010" stroke-width="1"/></svg>
<div class="a" style="left:272px;top:64px;width:4.5px;height:0.9px;background:#b01010;"></div>
<svg style="left:281.5px;top:61.5px" width="6" height="6"><circle cx="3" cy="3" r="1.8" fill="#a02020"/><path d="M3 0V6M0 3H6" stroke="#a02020" stroke-width="0.6"/></svg>
<div class="t" style="left:292.00px;top:62.61px;font-size:5.2px;color:#222;font-weight:bold;transform:scaleX(1.053);">R0</div>
<div class="a" style="left:300.8px;top:60.5px;width:0.6px;height:8px;background:#ccc;"></div>
<div class="t" style="left:305.00px;top:62.87px;font-size:5.6px;color:#222;transform:scaleX(0.741);">Display</div>
<div class="a" style="left:320.5px;top:59.8px;width:33.5px;height:9.5px;background:#fff;border:0.6px solid #cfcfcf"></div>
<div class="t" style="left:322.50px;top:62.87px;font-size:5.6px;color:#111;transform:scaleX(0.803);">Member</div>
<svg style="left:349px;top:63px" width="4" height="3"><path d="M0.3 0.4L2 2.2L3.7 0.4" fill="none" stroke="#888" stroke-width="0.5"/></svg>
<div class="a" style="left:355.5px;top:59.8px;width:125.5px;height:9.5px;background:#fff;border:0.6px solid #cfcfcf"></div>
<div class="t" style="left:357.30px;top:62.87px;font-size:5.6px;color:#111;transform:scaleX(0.857);">all</div>
<svg style="left:475px;top:63px" width="4" height="3"><path d="M0.3 0.4L2 2.2L3.7 0.4" fill="none" stroke="#888" stroke-width="0.5"/></svg>
<svg style="left:482px;top:61.8px" width="5" height="5"><path d="M2.5 0.2V4.8M0.2 2.5H4.8" stroke="#1a2a9a" stroke-width="1.1"/></svg>
<div class="a" style="left:491.5px;top:64px;width:5px;height:1.1px;background:#1a2a9a;"></div>
<div class="t" style="left:500.20px;top:62.87px;font-size:5.0px;color:#aaa;transform:scaleX(1.199);">all</div>
<svg style="left:512px;top:61.5px" width="3" height="6"><path d="M0.5 0.5H2.5V3H0.5ZM1.5 3V5.8" fill="#bbb" stroke="#bbb" stroke-width="0.5"/></svg>
<div class="a" style="left:120.8px;top:70.3px;width:399.5px;height:1.3px;background:#a8a8a8;"></div>
<div class="a" style="left:121px;top:71.5px;width:399px;height:319.3px;background:#ffffff;"></div>
<div class="a" style="left:121.2px;top:71.5px;width:0.7px;height:319.3px;background:#9aa8b8;"></div>
<div class="a" style="left:413.8px;top:75.2px;width:11px;height:11px;border-radius:50%;background:#fbe0e4"></div>
<div class="t" style="left:418.00px;top:79.32px;font-size:4.0px;color:#c8a0a8;">0</div>
<div class="t" style="left:430.00px;top:75.71px;font-size:4.6px;color:#333;transform:scaleX(0.921);">DESIGN LAYER</div>
<div class="t" style="left:430.00px;top:82.71px;font-size:4.6px;color:#333;transform:scaleX(1.049);">Scale: 1:1068</div>
<div class="t" style="left:430.00px;top:89.61px;font-size:4.6px;color:#333;transform:scaleX(1.124);">Highlighted:</div>
<div class="t" style="left:430.00px;top:95.91px;font-size:4.6px;color:#333;transform:scaleX(1.051);">Coincident Nodes:</div>
<div class="t" style="left:430.00px;top:101.81px;font-size:4.6px;color:#333;transform:scaleX(1.047);">Coincident Members:</div>
<div class="t" style="left:430.00px;top:109.11px;font-size:4.6px;color:#333;transform:scaleX(0.951);">Case: L1</div>
<svg style="left:0;top:0" width="818" height="492"><line x1="122.0" y1="218.0" x2="344.0" y2="169.0" stroke="#cacaca" stroke-width="0.5" stroke-dasharray="2.5 2"/><line x1="136.1" y1="219.2" x2="356.6" y2="170.1" stroke="#cacaca" stroke-width="0.5" stroke-dasharray="2.5 2"/><line x1="150.3" y1="220.4" x2="369.1" y2="171.1" stroke="#cacaca" stroke-width="0.5" stroke-dasharray="2.5 2"/><line x1="164.4" y1="221.6" x2="381.7" y2="172.2" stroke="#cacaca" stroke-width="0.5" stroke-dasharray="2.5 2"/><line x1="178.6" y1="222.9" x2="394.3" y2="173.3" stroke="#cacaca" stroke-width="0.5" stroke-dasharray="2.5 2"/><line x1="192.7" y1="224.1" x2="406.9" y2="174.4" stroke="#cacaca" stroke-width="0.5" stroke-dasharray="2.5 2"/><line x1="206.9" y1="225.3" x2="419.4" y2="175.4" stroke="#cacaca" stroke-width="0.5" stroke-dasharray="2.5 2"/><line x1="221.0" y1="226.5" x2="432.0" y2="176.5" stroke="#cacaca" stroke-width="0.5" stroke-dasharray="2.5 2"/><line x1="235.1" y1="227.7" x2="444.6" y2="177.6" stroke="#cacaca" stroke-width="0.5" stroke-dasharray="2.5 2"/><line x1="249.3" y1="228.9" x2="457.1" y2="178.6" stroke="#cacaca" stroke-width="0.5" stroke-dasharray="2.5 2"/><line x1="263.4" y1="230.1" x2="469.7" y2="179.7" stroke="#cacaca" stroke-width="0.5" stroke-dasharray="2.5 2"/><line x1="277.6" y1="231.4" x2="482.3" y2="180.8" stroke="#cacaca" stroke-width="0.5" stroke-dasharray="2.5 2"/><line x1="291.7" y1="232.6" x2="494.9" y2="181.9" stroke="#cacaca" stroke-width="0.5" stroke-dasharray="2.5 2"/><line x1="305.9" y1="233.8" x2="507.4" y2="182.9" stroke="#cacaca" stroke-width="0.5" stroke-dasharray="2.5 2"/><line x1="320.0" y1="235.0" x2="520.0" y2="184.0" stroke="#cacaca" stroke-width="0.5" stroke-dasharray="2.5 2"/><line x1="122.0" y1="218.0" x2="320.0" y2="235.0" stroke="#ececec" stroke-width="0.4" stroke-dasharray="1.5 1.5"/><line x1="140.5" y1="213.9" x2="336.7" y2="230.8" stroke="#ececec" stroke-width="0.4" stroke-dasharray="1.5 1.5"/><line x1="159.0" y1="209.8" x2="353.3" y2="226.5" stroke="#ececec" stroke-width="0.4" stroke-dasharray="1.5 1.5"/><line x1="177.5" y1="205.8" x2="370.0" y2="222.2" stroke="#ececec" stroke-width="0.4" stroke-dasharray="1.5 1.5"/><line x1="196.0" y1="201.7" x2="386.7" y2="218.0" stroke="#ececec" stroke-width="0.4" stroke-dasharray="1.5 1.5"/><line x1="214.5" y1="197.6" x2="403.3" y2="213.8" stroke="#ececec" stroke-width="0.4" stroke-dasharray="1.5 1.5"/><line x1="233.0" y1="193.5" x2="420.0" y2="209.5" stroke="#ececec" stroke-width="0.4" stroke-dasharray="1.5 1.5"/><line x1="251.5" y1="189.4" x2="436.7" y2="205.2" stroke="#ececec" stroke-width="0.4" stroke-dasharray="1.5 1.5"/><line x1="270.0" y1="185.3" x2="453.3" y2="201.0" stroke="#ececec" stroke-width="0.4" stroke-dasharray="1.5 1.5"/><line x1="288.5" y1="181.2" x2="470.0" y2="196.8" stroke="#ececec" stroke-width="0.4" stroke-dasharray="1.5 1.5"/><line x1="307.0" y1="177.2" x2="486.7" y2="192.5" stroke="#ececec" stroke-width="0.4" stroke-dasharray="1.5 1.5"/><line x1="325.5" y1="173.1" x2="503.3" y2="188.2" stroke="#ececec" stroke-width="0.4" stroke-dasharray="1.5 1.5"/><line x1="344.0" y1="169.0" x2="520.0" y2="184.0" stroke="#ececec" stroke-width="0.4" stroke-dasharray="1.5 1.5"/><line x1="264" y1="216" x2="370" y2="223.5" stroke="#ec8a8a" stroke-width="0.8" stroke-dasharray="3.5 3"/><line x1="262" y1="216" x2="418.5" y2="176.5" stroke="#6ad06a" stroke-width="0.8" stroke-dasharray="1.3 1.7"/><polyline points="219,214.8 343.6,182.1 356,183 421.6,188.2 297.8,220.3 219,214.8" fill="none" stroke="#5b8fe0" stroke-width="0.8"/><path d="M328.2 195.4Q336 191.2 344 191.5Q360 192 368.2 193.6Q358 197.6 350.5 197.4Q338 197.3 328.2 195.4Z" fill="none" stroke="#e0109a" stroke-width="1.3"/><ellipse cx="347" cy="194.4" rx="6.5" ry="1.6" fill="none" stroke="#e0109a" stroke-width="0.8"/><path d="M336 195.8L358 193" stroke="#e0109a" stroke-width="0.6"/><line x1="238.3" y1="214.2" x2="238.3" y2="272" stroke="#5cbcbc" stroke-width="0.8"/><line x1="294.2" y1="198.9" x2="294.2" y2="258.5" stroke="#5cbcbc" stroke-width="0.8"/><line x1="290.9" y1="217.8" x2="290.9" y2="276.5" stroke="#5cbcbc" stroke-width="0.8"/><line x1="349.8" y1="185.1" x2="349.8" y2="244.5" stroke="#5cbcbc" stroke-width="0.8"/><line x1="346.7" y1="203.5" x2="346.7" y2="262.2" stroke="#5cbcbc" stroke-width="0.8"/><line x1="402.3" y1="188.2" x2="402.3" y2="247.8" stroke="#5cbcbc" stroke-width="0.8"/><path d="M234.1 272.8L235.5 274.8L237.1 273.6L238.8 274.9L240.5 273.5L241.8 274.8L242.6 272.8" fill="none" stroke="#1e7a28" stroke-width="1.4"/><rect x="236.3" y="270.0" width="4" height="4" rx="1" fill="#c030c8"/><rect x="237.5" y="271.4" width="1.8" height="2" fill="#f8c8f8"/><path d="M290.0 259.3L291.4 261.3L293.0 260.1L294.7 261.4L296.4 260.0L297.7 261.3L298.5 259.3" fill="none" stroke="#1e7a28" stroke-width="1.4"/><rect x="292.2" y="256.5" width="4" height="4" rx="1" fill="#c030c8"/><rect x="293.4" y="257.9" width="1.8" height="2" fill="#f8c8f8"/><path d="M286.7 277.3L288.1 279.3L289.7 278.1L291.4 279.4L293.1 278.0L294.4 279.3L295.2 277.3" fill="none" stroke="#1e7a28" stroke-width="1.4"/><rect x="288.9" y="274.5" width="4" height="4" rx="1" fill="#c030c8"/><rect x="290.1" y="275.9" width="1.8" height="2" fill="#f8c8f8"/><path d="M345.6 245.3L347.0 247.3L348.6 246.1L350.3 247.4L352.0 246.0L353.3 247.3L354.1 245.3" fill="none" stroke="#1e7a28" stroke-width="1.4"/><rect x="347.8" y="242.5" width="4" height="4" rx="1" fill="#c030c8"/><rect x="349.0" y="243.9" width="1.8" height="2" fill="#f8c8f8"/><path d="M342.5 263.0L343.9 265.0L345.5 263.8L347.2 265.1L348.9 263.7L350.2 265.0L351.0 263.0" fill="none" stroke="#1e7a28" stroke-width="1.4"/><rect x="344.7" y="260.2" width="4" height="4" rx="1" fill="#c030c8"/><rect x="345.9" y="261.6" width="1.8" height="2" fill="#f8c8f8"/><path d="M398.1 248.6L399.5 250.6L401.1 249.4L402.8 250.7L404.5 249.3L405.8 250.6L406.6 248.6" fill="none" stroke="#1e7a28" stroke-width="1.4"/><rect x="400.3" y="245.8" width="4" height="4" rx="1" fill="#c030c8"/><rect x="401.5" y="247.2" width="1.8" height="2" fill="#f8c8f8"/><line x1="127.5" y1="371.5" x2="127.5" y2="384" stroke="#8080e0" stroke-width="0.6"/><line x1="127.5" y1="384" x2="139" y2="384" stroke="#e06060" stroke-width="0.6"/><line x1="127.5" y1="384" x2="133" y2="382" stroke="#40c040" stroke-width="0.6"/><text x="127" y="370" font-size="3.5" fill="#999" font-family="Liberation Sans">Z</text><text x="134" y="382" font-size="3.5" fill="#999" font-family="Liberation Sans">Y</text><text x="140.5" y="385.5" font-size="3.5" fill="#999" font-family="Liberation Sans">X</text></svg>
<div class="a" style="left:117px;top:397.5px;width:547px;height:84.5px;background:#ffffff;"></div>
<div class="a" style="left:117px;top:397.3px;width:547px;height:7.7px;background:linear-gradient(#bfcfe1,#d7e2ee);"></div>
<div class="t" style="left:118.50px;top:399.81px;font-size:5.2px;color:#333;transform:scaleX(0.907);">Messages</div>
<svg style="left:649.5px;top:398.8px" width="4.5" height="5"><path d="M1 0.5H3.5V2.5L4.2 3.2H0.3L1 2.5Z" fill="#333"/><path d="M2.2 3.2V4.8" stroke="#333" stroke-width="0.6"/></svg>
<div class="a" style="left:657.5px;top:398.8px;width:5.2px;height:5.2px;background:#d9534f;"></div>
<svg style="left:658.6px;top:399.9px" width="3" height="3"><path d="M0.2 0.6H2.8L1.5 2.6Z" fill="#fff"/></svg>
<div class="a" style="left:117px;top:405px;width:547px;height:12px;background:#f5f5f5;"></div>
<div class="a" style="left:119.5px;top:408px;width:6.5px;height:6px;border:0.6px solid #555;background:#fff"></div>
<div class="a" style="left:120.5px;top:410.5px;width:4.5px;height:0.6px;background:#555;"></div>
<div class="t" style="left:127.00px;top:409.60px;font-size:5.8px;color:#1a1a1a;transform:scaleX(0.813);">Messages</div>
<div class="a" style="left:151.3px;top:406px;width:0.7px;height:10px;background:#333;"></div>
<div class="a" style="left:154px;top:408px;width:6.5px;height:6px;border:0.6px solid #555;background:#fff"></div>
<div class="a" style="left:154.5px;top:408.5px;width:5.5px;height:1.4px;background:#555;"></div>
<div class="t" style="left:161.00px;top:409.57px;font-size:5.0px;color:#aaa;transform:scaleX(0.990);">Results</div>
<div class="a" style="left:180px;top:406.5px;width:0.6px;height:9px;background:#ccc;"></div>
<div class="a" style="left:183px;top:407.5px;width:5px;height:7px;border:0.6px solid #777;background:#fff;border-radius:1px"></div>
<svg style="left:183.8px;top:409.5px" width="4" height="4"><path d="M0.3 2L1.5 3.2L3.7 0.5" fill="none" stroke="#30a030" stroke-width="0.8"/></svg>
<div class="t" style="left:190.00px;top:409.57px;font-size:5.0px;color:#aaa;transform:scaleX(0.914);">Reports</div>
<div class="a" style="left:209.5px;top:406.5px;width:0.6px;height:9px;background:#ccc;"></div>
<div class="a" style="left:117px;top:417px;width:0.7px;height:64px;background:#cfcfcf;"></div>
<div class="a" style="left:663.1px;top:417px;width:0.7px;height:64px;background:#d6d6d6;"></div>
<div class="a" style="left:663.8px;top:44px;width:2.4px;height:438px;background:#fbfbfb;"></div>
<div class="a" style="left:666px;top:44px;width:142px;height:438px;background:#ffffff;"></div>
<div class="a" style="left:666px;top:44.2px;width:141.5px;height:7.8px;background:linear-gradient(#bfcfe1,#d7e2ee);"></div>
<div class="t" style="left:667.50px;top:46.17px;font-size:5.0px;color:#333;transform:scaleX(0.965);">Properties</div>
<svg style="left:792.5px;top:45.5px" width="4.5" height="5"><path d="M1 0.5H3.5V2.5L4.2 3.2H0.3L1 2.5Z" fill="#333"/><path d="M2.2 3.2V4.8" stroke="#333" stroke-width="0.6"/></svg>
<div class="a" style="left:801px;top:45.2px;width:5.5px;height:5.5px;background:#d9534f;"></div>
<svg style="left:802.3px;top:46.5px" width="3" height="3"><path d="M0.2 0.6H2.8L1.5 2.6Z" fill="#fff"/></svg>
<div class="a" style="left:666px;top:51.8px;width:142px;height:10.7px;background:#f3f3f3;"></div>
<svg style="left:667.80px;top:54.4px" width="7" height="7" viewBox="0 0 7 7"><rect x="0.3" y="2.5" width="3.5" height="3.5" fill="#2060d0"/><circle cx="4.5" cy="2" r="1.8" fill="#e02020"/><circle cx="4.8" cy="5" r="1.8" fill="#444"/><path d="M1 6.8L2.5 4.5L4 6.8Z" fill="#20b040"/></svg>
<div class="t" style="left:677.30px;top:56.24px;font-size:4.8px;color:#666;transform:scaleX(0.917);">Gra...</div>
<div class="a" style="left:690px;top:53.5px;width:0.6px;height:8px;background:#c8c8c8;"></div>
<svg style="left:691.50px;top:54.4px" width="7" height="7" viewBox="0 0 7 7"><rect x="0.3" y="0.3" width="6.4" height="6.4" fill="#bcd4f4"/><path d="M1.5 1.5H3V3H1.5ZM4 1.5H5.5V3H4ZM1.5 4H3V5.5H1.5ZM4 4H5.5V5.5H4Z" fill="#2a4a8a"/></svg>
<div class="t" style="left:699.30px;top:56.24px;font-size:4.8px;color:#666;transform:scaleX(0.982);">Ent...</div>
<div class="a" style="left:712.5px;top:53.5px;width:0.6px;height:8px;background:#c8c8c8;"></div>
<svg style="left:713.50px;top:54.4px" width="7" height="7" viewBox="0 0 7 7"><path d="M0.5 4L4 0.5H6.5V3L3 6.5Z" fill="#444"/></svg>
<div class="t" style="left:723.00px;top:56.24px;font-size:4.8px;color:#666;transform:scaleX(0.874);">Lab...</div>
<div class="a" style="left:734.5px;top:53.5px;width:0.6px;height:8px;background:#c8c8c8;"></div>
<svg style="left:736.50px;top:54.4px" width="7" height="7" viewBox="0 0 7 7"><rect x="0.5" y="0.5" width="6" height="6" fill="url(#rb)"/><defs><linearGradient id="rb" x1="0" y1="1" x2="1" y2="0"><stop offset="0" stop-color="#2040e0"/><stop offset="0.5" stop-color="#40e040"/><stop offset="1" stop-color="#e02020"/></linearGradient></defs></svg>
<div class="t" style="left:745.00px;top:56.24px;font-size:4.8px;color:#666;transform:scaleX(0.937);">Co...</div>
<div class="a" style="left:755px;top:53.5px;width:0.6px;height:8px;background:#c8c8c8;"></div>
<svg style="left:757.50px;top:54.4px" width="7" height="7" viewBox="0 0 7 7"><path d="M0.5 1V6M0.5 3L2.5 5L4 3L6.5 4.5" fill="none" stroke="#2070e0" stroke-width="0.8"/></svg>
<div class="t" style="left:766.00px;top:56.24px;font-size:4.8px;color:#666;transform:scaleX(0.937);">Dia...</div>
<div class="a" style="left:777.5px;top:53.5px;width:0.6px;height:8px;background:#c8c8c8;"></div>
<div class="a" style="left:781.2px;top:54px;width:7.5px;height:7.5px;background:#cfe2fb;"></div>
<svg style="left:781.50px;top:54.4px" width="7" height="7" viewBox="0 0 7 7"><rect x="0.5" y="0.5" width="6" height="6" fill="#cfe2fb" stroke="#2060c0" stroke-width="0.6"/><path d="M2 5L5 1.5" stroke="#2060c0" stroke-width="0.8"/></svg>
<div class="t" style="left:790.00px;top:56.24px;font-size:4.8px;color:#222;font-weight:bold;transform:scaleX(0.916);">Pro...</div>
<div class="a" style="left:803.2px;top:53px;width:1px;height:9px;background:#8a8a8a;"></div>
<div class="a" style="left:666.3px;top:62.5px;width:0.8px;height:419px;background:#d0d0d0;"></div>
<div class="a" style="left:806.5px;top:62.5px;width:0.8px;height:419px;background:#d0d0d0;"></div>
<div class="t" style="left:671.00px;top:67.98px;font-size:7.0px;color:#333;transform:scaleX(0.969);">Node Properties</div>
<div class="t" style="left:671.00px;top:77.75px;font-size:4.5px;color:#555;transform:scaleX(1.021);">(6 selected)</div>
<div class="a" style="left:667px;top:85px;width:139.5px;height:0.8px;background:#cfcfcf;"></div>
<div class="t" style="left:670.00px;top:93.81px;font-size:4.6px;color:#555;transform:scaleX(0.937);">Name</div>
<div class="a" style="left:670px;top:97px;width:134px;height:9.5px;background:#f0f0f0;"></div>
<div class="a" style="left:670px;top:105.9px;width:134px;height:0.6px;background:#e2e2e2;"></div>
<div class="t" style="left:671.80px;top:100.72px;font-size:5.6px;color:#777;transform:scaleX(1.038);">(none)</div>
<div class="t" style="left:669.50px;top:113.91px;font-size:4.6px;color:#555;transform:scaleX(1.033);">Colour</div>
<svg style="left:671px;top:119.5px" width="7" height="7" viewBox="0 0 7 7"><path d="M1 6L5 1.5L6.2 2.7L2.3 6.6Z" fill="#333"/><path d="M0.5 1L6.5 6.5" stroke="#333" stroke-width="0.7"/></svg>
<div class="a" style="left:683px;top:118.5px;width:120.6px;height:9.2px;background:#f0f0f0;"></div>
<div class="a" style="left:683px;top:127.10000000000001px;width:120.6px;height:0.6px;background:#e2e2e2;"></div>
<div class="t" style="left:684.80px;top:121.27px;font-size:5.6px;color:#777;transform:scaleX(1.038);">(none)</div>
<svg style="left:794.80px;top:122.50px" width="4" height="2.5"><path d="M0.3 0.3L2 1.9L3.7 0.3Z" fill="#555" stroke="#555" stroke-width="0.4"/></svg>
<div class="t" style="left:669.50px;top:137.41px;font-size:4.6px;color:#555;transform:scaleX(1.080);">Position (m)</div>
<div class="a" style="left:669.5px;top:143px;width:43.5px;height:9.7px;background:#f0f0f0;"></div>
<div class="a" style="left:669.5px;top:152.1px;width:43.5px;height:0.6px;background:#e2e2e2;"></div>
<div class="t" style="left:671.30px;top:146.82px;font-size:5.6px;color:#777;transform:scaleX(1.080);">(varies)</div>
<div class="a" style="left:715.2px;top:143px;width:42.7px;height:9.7px;background:#f0f0f0;"></div>
<div class="a" style="left:715.2px;top:152.1px;width:42.7px;height:0.6px;background:#e2e2e2;"></div>
<div class="t" style="left:717.00px;top:146.82px;font-size:5.6px;color:#777;transform:scaleX(1.080);">(varies)</div>
<div class="a" style="left:760.3px;top:143px;width:43.3px;height:9.7px;background:#f0f0f0;"></div>
<div class="a" style="left:760.3px;top:152.1px;width:43.3px;height:0.6px;background:#e2e2e2;"></div>
<div class="t" style="left:762.10px;top:146.82px;font-size:5.6px;color:#222;transform:scaleX(1.079);">0</div>
<div class="t" style="left:669.50px;top:159.41px;font-size:4.6px;color:#555;transform:scaleX(1.036);">Axis</div>
<div class="a" style="left:669.5px;top:163.4px;width:134px;height:9.6px;background:#f0f0f0;"></div>
<div class="a" style="left:669.5px;top:172.4px;width:134px;height:0.6px;background:#e2e2e2;"></div>
<div class="t" style="left:671.30px;top:167.17px;font-size:5.6px;color:#333;transform:scaleX(1.072);">Global</div>
<svg style="left:794.70px;top:167.60px" width="4" height="2.5"><path d="M0.3 0.3L2 1.9L3.7 0.3Z" fill="#555" stroke="#555" stroke-width="0.4"/></svg>
<div class="t" style="left:669.50px;top:182.21px;font-size:4.6px;color:#555;transform:scaleX(1.032);">Restraint</div>
<div class="a" style="left:668.8px;top:188.9px;width:17px;height:8.8px;border:0.7px solid #5b8fd6;background:#fff;border-radius:1.2px"></div>
<div class="t" style="left:671.30px;top:191.50px;font-size:5.5px;color:#1f5cb0;transform:scaleX(1.017);">Free</div>
<div class="a" style="left:687.8px;top:188.9px;width:16px;height:8.8px;border:0.7px solid #5b8fd6;background:#fff;border-radius:1.2px"></div>
<div class="t" style="left:691.50px;top:191.50px;font-size:5.5px;color:#1f5cb0;transform:scaleX(1.069);">Pin</div>
<div class="a" style="left:706.3px;top:188.9px;width:16.5px;height:8.8px;background:#1b5cb5;border-radius:1.2px"></div>
<div class="t" style="left:710.00px;top:191.50px;font-size:5.5px;color:#fff;transform:scaleX(1.159);">Fix</div>
<div class="t" style="left:672.70px;top:199.61px;font-size:4.6px;color:#555;">x</div>
<div class="a" style="left:670.4px;top:206px;width:7.2px;height:7.5px;background:#1b5cb5;border-radius:0.8px"></div>
<svg style="left:671.40px;top:207.5px" width="5.2" height="4.5"><path d="M0.5 2.2L2 3.8L4.8 0.6" fill="none" stroke="#fff" stroke-width="0.9"/></svg>
<div class="t" style="left:686.20px;top:199.61px;font-size:4.6px;color:#555;">y</div>
<div class="a" style="left:683.9px;top:206px;width:7.2px;height:7.5px;background:#1b5cb5;border-radius:0.8px"></div>
<svg style="left:684.90px;top:207.5px" width="5.2" height="4.5"><path d="M0.5 2.2L2 3.8L4.8 0.6" fill="none" stroke="#fff" stroke-width="0.9"/></svg>
<div class="t" style="left:699.20px;top:199.61px;font-size:4.6px;color:#555;">z</div>
<div class="a" style="left:696.9px;top:206px;width:7.2px;height:7.5px;background:#1b5cb5;border-radius:0.8px"></div>
<svg style="left:697.90px;top:207.5px" width="5.2" height="4.5"><path d="M0.5 2.2L2 3.8L4.8 0.6" fill="none" stroke="#fff" stroke-width="0.9"/></svg>
<div class="t" style="left:711.10px;top:199.61px;font-size:4.6px;color:#555;">xx</div>
<div class="a" style="left:710.1px;top:206px;width:7.2px;height:7.5px;background:#1b5cb5;border-radius:0.8px"></div>
<svg style="left:711.10px;top:207.5px" width="5.2" height="4.5"><path d="M0.5 2.2L2 3.8L4.8 0.6" fill="none" stroke="#fff" stroke-width="0.9"/></svg>
<div class="t" style="left:724.20px;top:199.61px;font-size:4.6px;color:#555;">yy</div>
<div class="a" style="left:723.1999999999999px;top:206px;width:7.2px;height:7.5px;background:#1b5cb5;border-radius:0.8px"></div>
<svg style="left:724.20px;top:207.5px" width="5.2" height="4.5"><path d="M0.5 2.2L2 3.8L4.8 0.6" fill="none" stroke="#fff" stroke-width="0.9"/></svg>
<div class="t" style="left:737.40px;top:199.61px;font-size:4.6px;color:#555;">zz</div>
<div class="a" style="left:736.4px;top:206px;width:7.2px;height:7.5px;background:#1b5cb5;border-radius:0.8px"></div>
<svg style="left:737.40px;top:207.5px" width="5.2" height="4.5"><path d="M0.5 2.2L2 3.8L4.8 0.6" fill="none" stroke="#fff" stroke-width="0.9"/></svg>
<div class="t" style="left:669.50px;top:217.21px;font-size:4.6px;color:#555;transform:scaleX(1.049);">Spring property</div>
<div class="t" style="left:715.20px;top:217.21px;font-size:4.6px;color:#555;transform:scaleX(1.012);">Mass property</div>
<div class="t" style="left:760.30px;top:217.21px;font-size:4.6px;color:#555;transform:scaleX(1.043);">Damper property</div>
<div class="a" style="left:669.5px;top:222.2px;width:43.5px;height:9.1px;background:#f0f0f0;"></div>
<div class="a" style="left:669.5px;top:230.7px;width:43.5px;height:0.6px;background:#e2e2e2;"></div>
<div class="t" style="left:671.30px;top:224.92px;font-size:5.6px;color:#777;transform:scaleX(1.038);">(none)</div>
<svg style="left:704.20px;top:226.15px" width="4" height="2.5"><path d="M0.3 0.3L2 1.9L3.7 0.3Z" fill="#555" stroke="#555" stroke-width="0.4"/></svg>
<div class="a" style="left:715.2px;top:222.2px;width:42.7px;height:9.1px;background:#f0f0f0;"></div>
<div class="a" style="left:715.2px;top:230.7px;width:42.7px;height:0.6px;background:#e2e2e2;"></div>
<div class="t" style="left:717.00px;top:224.92px;font-size:5.6px;color:#777;transform:scaleX(1.038);">(none)</div>
<svg style="left:749.10px;top:226.15px" width="4" height="2.5"><path d="M0.3 0.3L2 1.9L3.7 0.3Z" fill="#555" stroke="#555" stroke-width="0.4"/></svg>
<div class="a" style="left:760.3px;top:222.2px;width:43.3px;height:9.1px;background:#f0f0f0;"></div>
<div class="a" style="left:760.3px;top:230.7px;width:43.3px;height:0.6px;background:#e2e2e2;"></div>
<div class="t" style="left:762.10px;top:224.92px;font-size:5.6px;color:#777;transform:scaleX(1.038);">(none)</div>
<svg style="left:794.80px;top:226.15px" width="4" height="2.5"><path d="M0.3 0.3L2 1.9L3.7 0.3Z" fill="#555" stroke="#555" stroke-width="0.4"/></svg>
<div class="t" style="left:669.50px;top:238.01px;font-size:4.6px;color:#555;transform:scaleX(1.084);">Initial offset (m)</div>
<div class="a" style="left:669.5px;top:241.7px;width:134px;height:10.1px;background:#f0f0f0;"></div>
<div class="a" style="left:669.5px;top:251.2px;width:134px;height:0.6px;background:#e2e2e2;"></div>
<div class="t" style="left:671.30px;top:245.72px;font-size:5.6px;color:#777;transform:scaleX(1.038);">(none)</div>
<div class="a" style="left:808px;top:44px;width:10px;height:438px;background:#fafafa;"></div>
<div class="a" style="left:807.6px;top:44px;width:0.7px;height:150px;background:#d8d8d8;"></div>
<div class="a" style="left:808.5px;top:105px;width:9px;height:8.5px;background:#cfe6fb;"></div>
<svg style="left:809.90px;top:51.90px" width="7" height="7" viewBox="0 0 7 7"><path d="M1 6L6 1" stroke="#aaa" stroke-width="0.7"/><circle cx="1.2" cy="5.8" r="0.8" fill="#888"/><circle cx="5.8" cy="1.2" r="0.8" fill="#888"/></svg>
<svg style="left:809.90px;top:60.80px" width="7" height="7" viewBox="0 0 7 7"><path d="M1.5 1H5.5M3.5 1V6M1.5 6H5.5" stroke="#555" stroke-width="0.8"/></svg>
<svg style="left:809.90px;top:70.50px" width="7" height="7" viewBox="0 0 7 7"><path d="M1 6L4 1.5L6 3.5" fill="none" stroke="#2060d0" stroke-width="1"/><circle cx="4.5" cy="2" r="1.6" fill="none" stroke="#444" stroke-width="0.6"/><rect x="0.5" y="3.5" width="2.5" height="3" fill="#2060d0"/></svg>
<svg style="left:809.90px;top:86.00px" width="7" height="7" viewBox="0 0 7 7"><path d="M1 6V1.5L3 1L3.5 3M6 6V1.5L4 1" fill="none" stroke="#666" stroke-width="0.6"/></svg>
<svg style="left:809.90px;top:95.00px" width="7" height="7" viewBox="0 0 7 7"><rect x="0.5" y="1.5" width="6" height="4" fill="#444"/><path d="M0.5 3.5H6.5" stroke="#eee" stroke-width="0.5"/></svg>
<svg style="left:809.90px;top:105.50px" width="7" height="7" viewBox="0 0 7 7"><path d="M1 2.5L3.5 1L6 2.5V5.5L3.5 6.8L1 5.5Z" fill="#bbb" stroke="#555" stroke-width="0.5"/><circle cx="1.5" cy="1.5" r="1" fill="#f08020"/></svg>
<svg style="left:809.90px;top:118.90px" width="7" height="7" viewBox="0 0 7 7"><circle cx="3.5" cy="3" r="2.5" fill="url(#rb2)"/><defs><linearGradient id="rb2"><stop offset="0" stop-color="#e02020"/><stop offset="0.5" stop-color="#40c040"/><stop offset="1" stop-color="#2040e0"/></linearGradient></defs><path d="M1 6.5L3 4" stroke="#333" stroke-width="0.7"/></svg>
<svg style="left:809.90px;top:129.50px" width="7" height="7" viewBox="0 0 7 7"><path d="M1 6L4 1.5L6 3.5" fill="none" stroke="#2060d0" stroke-width="0.9"/><circle cx="4.5" cy="2" r="1.6" fill="none" stroke="#444" stroke-width="0.6"/></svg>
<svg style="left:809.90px;top:142.50px" width="7" height="7" viewBox="0 0 7 7"><path d="M3.5 0.5V6.5M0.5 3.5H6.5" stroke="#333" stroke-width="0.8"/><path d="M2.5 1.5L3.5 0.3L4.5 1.5M2.5 5.5L3.5 6.7L4.5 5.5M1.5 2.5L0.3 3.5L1.5 4.5M5.5 2.5L6.7 3.5L5.5 4.5" fill="#333"/></svg>
<svg style="left:809.90px;top:153.10px" width="7" height="7" viewBox="0 0 7 7"><path d="M1 1.5L2.5 5.5L5 3.5V6" fill="none" stroke="#bbb" stroke-width="0.6"/></svg>
<svg style="left:809.90px;top:163.50px" width="7" height="7" viewBox="0 0 7 7"><path d="M1 5.5H3L6 2" fill="none" stroke="#bbb" stroke-width="0.6"/></svg>
<svg style="left:809.90px;top:174.20px" width="7" height="7" viewBox="0 0 7 7"><path d="M1 6L3.5 1.5H6" fill="none" stroke="#bbb" stroke-width="0.6"/></svg>
<div class="a" style="left:809px;top:47px;width:9px;height:0.6px;background:#cfcfcf;"></div>
<div class="a" style="left:809px;top:81.9px;width:9px;height:0.6px;background:#cfcfcf;"></div>
<div class="a" style="left:809px;top:115.5px;width:9px;height:0.6px;background:#cfcfcf;"></div>
<div class="a" style="left:809px;top:139.5px;width:9px;height:0.6px;background:#cfcfcf;"></div>
<div class="a" style="left:812.7px;top:187.6px;width:1.4px;height:1.4px;background:#333;"></div>
<div class="a" style="left:808px;top:193.8px;width:10px;height:0.6px;background:#cfcfcf;"></div>
<div class="a" style="left:0px;top:481px;width:818px;height:11px;background:#f0f0f0;"></div>
<div class="a" style="left:0px;top:480.8px;width:818px;height:0.8px;background:#d4d4d4;"></div>
<div class="a" style="left:0px;top:491px;width:818px;height:1px;background:#dedede;"></div>
<div class="t" style="left:1.50px;top:484.88px;font-size:5.0px;color:#1f5fd0;transform:scaleX(0.984);text-decoration:underline;">www.oasys-software.com</div>
<div class="a" style="left:67.5px;top:482.5px;width:0.6px;height:7.5px;background:#cfcfcf;"></div>
<svg style="left:378.2px;top:483.6px" width="5.6" height="5.6"><rect x="0" y="0" width="5.6" height="5.6" rx="1.3" fill="#8a8a8a"/><path d="M1.6 1.6L4 4M4 1.6L1.6 4" stroke="#fff" stroke-width="0.8"/></svg>
<div class="a" style="left:388px;top:482.5px;width:0.6px;height:7.5px;background:#d8d8d8;"></div>
<div class="t" style="left:392.00px;top:484.57px;font-size:5.6px;color:#222;transform:scaleX(0.804);">kN</div>
<div class="t" style="left:400.40px;top:484.57px;font-size:5.6px;color:#222;transform:scaleX(0.751);">(m, mm, cm)</div>
<div class="t" style="left:428.80px;top:484.57px;font-size:5.6px;color:#222;transform:scaleX(1.414);">t</div>
<div class="t" style="left:432.70px;top:484.57px;font-size:5.6px;color:#222;transform:scaleX(0.881);">N/mm²</div>
<div class="t" style="left:449.80px;top:484.57px;font-size:5.6px;color:#222;transform:scaleX(0.828);">(s, min, day)</div>
<div class="t" style="left:478.00px;top:484.57px;font-size:5.6px;color:#222;transform:scaleX(0.796);">°C</div>
<div class="t" style="left:485.00px;top:484.57px;font-size:5.6px;color:#222;transform:scaleX(1.011);">m/s²</div>
<div class="t" style="left:497.40px;top:484.57px;font-size:5.6px;color:#222;transform:scaleX(0.777);">MJ</div>
<div class="a" style="left:518px;top:482.5px;width:0.6px;height:7.5px;background:#d8d8d8;"></div>
<div class="t" style="left:521.90px;top:484.67px;font-size:5.6px;color:#222;transform:scaleX(0.815);">Steel: BS EN 1993-1-1:2005, Concrete: BS EN 1992-1-1:2004</div>
<div class="a" style="left:675.7px;top:482.4px;width:57.6px;height:8.6px;background:#f3f3f3;border:0.6px solid #d0d0d0"></div>
<div class="t" style="left:677.20px;top:484.67px;font-size:5.6px;color:#222;transform:scaleX(0.857);">1 : Grid plane 1</div>
<div class="a" style="left:727.3000000000001px;top:482.9px;width:5.4px;height:7.6px;background:#fff;"></div>
<div class="a" style="left:727.1px;top:482.9px;width:0.5px;height:7.6px;background:#d8d8d8;"></div>
<svg style="left:728.00px;top:485.6px" width="4" height="3"><path d="M0.3 0.4L2 2.2L3.7 0.4" fill="none" stroke="#777" stroke-width="0.5"/></svg>
<div class="a" style="left:734.3px;top:482.4px;width:57.4px;height:8.6px;background:#f3f3f3;border:0.6px solid #d0d0d0"></div>
<div class="t" style="left:735.80px;top:484.67px;font-size:5.6px;color:#222;transform:scaleX(0.898);">1 : Default grid layout</div>
<div class="a" style="left:785.6999999999999px;top:482.9px;width:5.4px;height:7.6px;background:#fff;"></div>
<div class="a" style="left:785.4999999999999px;top:482.9px;width:0.5px;height:7.6px;background:#d8d8d8;"></div>
<svg style="left:786.40px;top:485.6px" width="4" height="3"><path d="M0.3 0.4L2 2.2L3.7 0.4" fill="none" stroke="#777" stroke-width="0.5"/></svg>
<div class="a" style="left:792.5px;top:482.5px;width:0.6px;height:7.5px;background:#d8d8d8;"></div>
<div class="t" style="left:795.40px;top:484.67px;font-size:5.6px;color:#222;transform:scaleX(0.973);">Modified</div>
</body></html>
